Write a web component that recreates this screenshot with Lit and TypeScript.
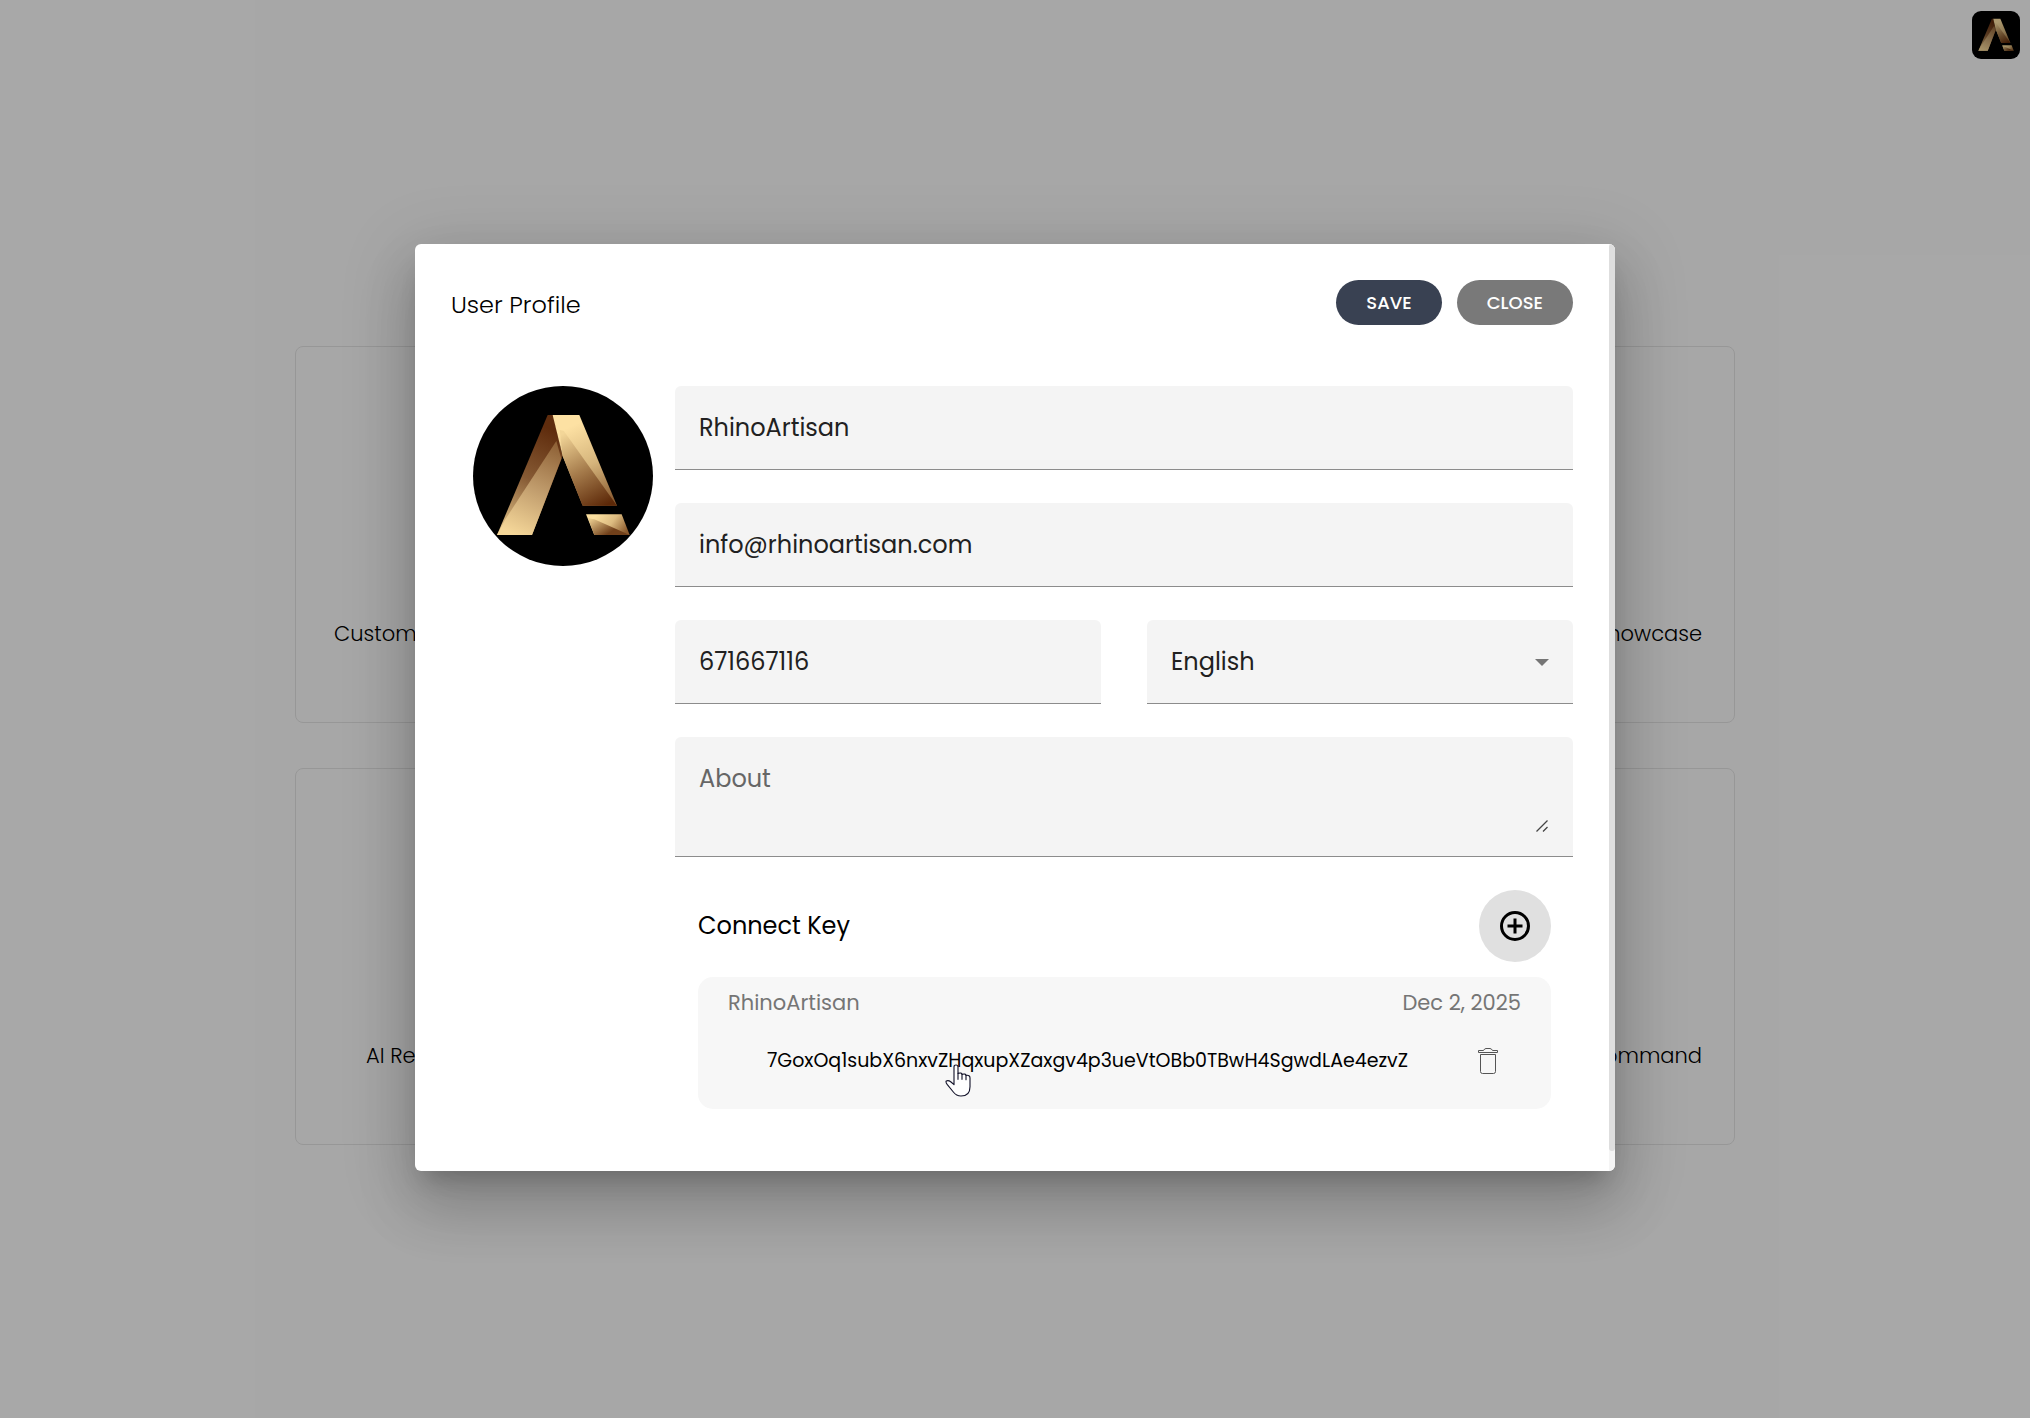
import { LitElement, html, css, svg } from "lit";
import { customElement, property } from "lit/decorators.js";

@customElement("brand-logo")
export class BrandLogo extends LitElement {
  static styles = css`
    :host {
      display: block;
      overflow: hidden;
      background: #000;
    }
    .mark {
      display: block;
      width: 100%;
      height: 100%;
    }
  `;

  render() {
    return html`
      <svg class="mark" viewBox="38 48 540 540" role="img" aria-label="Logo">
        <defs>
          <linearGradient id="legDark" gradientUnits="userSpaceOnUse" x1="275" y1="180" x2="130" y2="470">
            <stop offset="0" stop-color="#5f2c0d" />
            <stop offset="0.5" stop-color="#865a34" />
            <stop offset="1" stop-color="#d9b980" />
          </linearGradient>
          <linearGradient id="legLight" gradientUnits="userSpaceOnUse" x1="290" y1="225" x2="165" y2="495">
            <stop offset="0" stop-color="#8f6237" />
            <stop offset="0.5" stop-color="#c19d6d" />
            <stop offset="1" stop-color="#f5d799" />
          </linearGradient>
          <linearGradient id="armLight" gradientUnits="userSpaceOnUse" x1="330" y1="170" x2="440" y2="400">
            <stop offset="0" stop-color="#fde1a3" />
            <stop offset="0.5" stop-color="#d6b57c" />
            <stop offset="1" stop-color="#8a5c31" />
          </linearGradient>
          <linearGradient id="armDark" gradientUnits="userSpaceOnUse" x1="310" y1="190" x2="430" y2="410">
            <stop offset="0" stop-color="#f3d698" />
            <stop offset="0.5" stop-color="#a67c4c" />
            <stop offset="1" stop-color="#5c2808" />
          </linearGradient>
          <linearGradient id="footLight" gradientUnits="userSpaceOnUse" x1="410" y1="433" x2="490" y2="495">
            <stop offset="0" stop-color="#fbdf9f" />
            <stop offset="0.5" stop-color="#dcbb80" />
            <stop offset="1" stop-color="#8a592c" />
          </linearGradient>
          <linearGradient id="footDark" gradientUnits="userSpaceOnUse" x1="395" y1="447" x2="430" y2="500">
            <stop offset="0" stop-color="#e6c78a" />
            <stop offset="1" stop-color="#71401a" />
          </linearGradient>
        </defs>
        <path d="M262 135H279L307 258L215 495H110Z" fill="url(#legDark)" />
        <path d="M288 213L303 266L215 495H110L135 448Z" fill="url(#legLight)" />
        <path d="M277 135H357L470 407H367L307 258Z" fill="url(#armLight)" />
        <path d="M298 180L310 182L470 407H367L307 258Z" fill="url(#armDark)" />
        <path d="M377 433H484L508 495H402Z" fill="url(#footLight)" />
        <path d="M383 445L402 448L508 495H402Z" fill="url(#footDark)" />
      </svg>
    `;
  }
}

@customElement("tool-board")
export class ToolBoard extends LitElement {
  @property({ attribute: false }) tiles: { label: string; place: string }[] = [
    { label: "Custom", place: "first" },
    { label: "howcase", place: "end" },
    { label: "AI Re", place: "second" },
    { label: "ommand", place: "end" },
  ];

  static styles = css`
    :host {
      display: flex;
      flex-direction: column;
      min-height: 100vh;
      background: #f7f7f7;
      color: #000;
    }
    .bar {
      display: flex;
      justify-content: flex-end;
      align-items: flex-start;
      min-height: 72px;
      padding: 11px 10px;
      box-sizing: border-box;
    }
    .badge {
      width: 48px;
      height: 48px;
      border-radius: 9px;
    }
    .main {
      flex: 1;
      display: flex;
      align-items: center;
      justify-content: center;
      padding: 0 24px;
    }
    .grid {
      display: grid;
      grid-template-columns: 1fr 1fr;
      gap: 45px;
      width: 100%;
      max-width: 1440px;
    }
    .tile {
      display: flex;
      flex-direction: column;
      justify-content: flex-end;
      min-height: 377px;
      padding: 0 32px 72px;
      box-sizing: border-box;
      border: 1px solid #dfdfdf;
      border-radius: 8px;
      font-size: 21px;
      line-height: 32px;
      font-weight: 300;
    }
    .first {
      padding-left: 38px;
    }
    .second {
      padding-left: 70px;
    }
    .end {
      text-align: end;
    }
  `;

  render() {
    return html`
      <header class="bar"><brand-logo class="badge"></brand-logo></header>
      <main class="main">
        <div class="grid">
          ${this.tiles.map((t) => html`<div class="tile ${t.place}">${t.label}</div>`)}
        </div>
      </main>
    `;
  }
}

const plusIcon = svg`
  <svg class="plus" viewBox="0 0 36 36" fill="none" stroke="#000" stroke-width="3" aria-hidden="true">
    <circle cx="18" cy="18" r="13.5" />
    <path d="M18 10.5V25.5M10.5 18H25.5" />
  </svg>`;

const trashIcon = svg`
  <svg class="trash" viewBox="0 0 20 27" fill="none" stroke="#555" stroke-width="1" aria-hidden="true">
    <path d="M0.5 2.5H5.5Q6.5 0.5 8 0.5H12Q13.5 0.5 14.5 2.5H19.5V4.5H0.5Z" />
    <path d="M2.5 6.5H17.5V23.5Q17.5 25.5 15.5 25.5H4.5Q2.5 25.5 2.5 23.5Z" />
  </svg>`;

const handIcon = svg`
  <svg class="hand" viewBox="0 0 78 99" fill="#fff" stroke="#14142b" stroke-width="3.4" stroke-linejoin="round" stroke-linecap="round" aria-hidden="true">
    <path d="M27 62V9Q27 3 33 3Q39 3 39 9V28Q51 25 51 31Q62 28 63 34Q75 32 75 42V68Q75 96 48 96Q34 96 25 84L7 62Q1 54 4 51Q10 48 18 54Z" />
    <path d="M39 28V46M51 31V46M63 34V47" fill="none" />
  </svg>`;

@customElement("profile-dialog")
export class ProfileDialog extends LitElement {
  static styles = css`
    :host {
      display: flex;
      width: 100%;
      max-width: 1200px;
      overflow: hidden;
      border-radius: 6px;
      background: #fff;
      color: #000;
      box-shadow: 0 16px 22px -10px rgba(0, 0, 0, 0.2), 0 36px 57px 4px rgba(0, 0, 0, 0.14),
        0 14px 69px 12px rgba(0, 0, 0, 0.12);
    }
    .content {
      flex: 1;
      min-width: 0;
      padding: 36px 36px 62px;
    }
    .track {
      display: flex;
      width: 6px;
      padding-bottom: 20px;
      background: #f5f5f5;
    }
    .thumb {
      flex: 1;
      border-radius: 3px;
      background: #dedede;
    }
    .head {
      display: flex;
      justify-content: space-between;
      align-items: center;
      margin-bottom: 61px;
    }
    .title {
      margin: 0;
      padding-top: 4px;
      font-size: 24px;
      line-height: 36px;
      font-weight: 300;
    }
    .actions {
      display: flex;
      gap: 15px;
    }
    button,
    input,
    select,
    textarea {
      margin: 0;
      border: 0;
      padding: 0;
      background: none;
      color: inherit;
      font: inherit;
      outline: none;
    }
    .pill {
      height: 45px;
      padding: 0 30px;
      border-radius: 23px;
      color: #fff;
      font-size: 18px;
      line-height: 27px;
      font-weight: 500;
    }
    .save {
      background: #394152;
    }
    .close {
      background: #797979;
    }
    .body {
      display: flex;
      align-items: flex-start;
    }
    .avatar {
      flex: none;
      width: 180px;
      height: 180px;
      margin: 0 22px;
      border-radius: 50%;
    }
    .form {
      flex: 1;
      min-width: 0;
      display: flex;
      flex-direction: column;
      gap: 33px;
    }
    .pair {
      display: grid;
      grid-template-columns: repeat(2, minmax(0, 1fr));
      gap: 46px;
    }
    .field {
      position: relative;
      display: flex;
      border-bottom: 1px solid #8c8c8c;
      border-radius: 6px 6px 0 0;
      background: #f4f4f4;
      color: #212121;
      font-size: 24px;
      line-height: 36px;
    }
    .control {
      flex: 1;
      min-width: 0;
      height: 83px;
      padding: 0 24px;
      box-sizing: border-box;
      appearance: none;
    }
    .area {
      height: 119px;
      padding-top: 24px;
      resize: none;
    }
    .area::placeholder {
      color: #666;
      opacity: 1;
    }
    .caret {
      position: absolute;
      right: 24px;
      top: 39px;
      width: 14px;
      height: 7px;
      pointer-events: none;
    }
    .grip {
      position: absolute;
      right: 25px;
      bottom: 24px;
      width: 12px;
      height: 12px;
      pointer-events: none;
    }
    .keys {
      display: flex;
      flex-direction: column;
      gap: 15px;
      padding: 0 22px 0 23px;
    }
    .keyhead {
      display: flex;
      justify-content: space-between;
      align-items: center;
    }
    .subtitle {
      margin: 0;
      font-size: 24px;
      line-height: 36px;
      font-weight: 400;
    }
    .add {
      display: flex;
      align-items: center;
      justify-content: center;
      width: 72px;
      height: 72px;
      border-radius: 50%;
      background: #e0e0e0;
    }
    .plus {
      width: 36px;
      height: 36px;
    }
    .card {
      height: 132px;
      padding: 10px 30px 0;
      box-sizing: border-box;
      border-radius: 15px;
      background: #f7f7f7;
    }
    .meta {
      display: flex;
      justify-content: space-between;
      color: #757575;
      font-size: 21px;
      line-height: 32px;
    }
    .row {
      display: flex;
      align-items: center;
      justify-content: space-between;
      margin-top: 24px;
      padding: 0 23px 0 39px;
    }
    .key {
      position: relative;
      font-size: 19px;
      line-height: 36px;
      cursor: pointer;
    }
    .hand {
      position: absolute;
      left: 178px;
      top: 21px;
      width: 26px;
      height: 33px;
    }
    .remove {
      display: flex;
    }
    .trash {
      width: 20px;
      height: 27px;
    }
  `;

  render() {
    return html`
      <div class="content">
        <header class="head">
          <h1 class="title">User Profile</h1>
          <div class="actions">
            <button class="pill save" type="button">SAVE</button>
            <button class="pill close" type="button">CLOSE</button>
          </div>
        </header>
        <div class="body">
          <brand-logo class="avatar"></brand-logo>
          <form class="form">
            <div class="field">
              <input class="control" type="text" aria-label="Name" .value=${"RhinoArtisan"} />
            </div>
            <div class="field">
              <input class="control" type="email" aria-label="Email" .value=${"info@rhinoartisan.com"} />
            </div>
            <div class="pair">
              <div class="field">
                <input class="control" type="tel" aria-label="Phone" .value=${"671667116"} />
              </div>
              <div class="field">
                <select class="control" aria-label="Language">
                  <option>English</option>
                </select>
                <svg class="caret" viewBox="0 0 14 7" aria-hidden="true"><path d="M0 0H14L7 7Z" fill="#757575" /></svg>
              </div>
            </div>
            <div class="field">
              <textarea class="control area" aria-label="About" placeholder="About"></textarea>
              <svg class="grip" viewBox="0 0 12 12" stroke="#444" stroke-width="1.3" aria-hidden="true">
                <path d="M0.5 11.5L11.5 0.5M7 11.5L11.5 7" />
              </svg>
            </div>
            <section class="keys">
              <div class="keyhead">
                <h2 class="subtitle">Connect Key</h2>
                <button class="add" type="button" aria-label="Add key">${plusIcon}</button>
              </div>
              <div class="card">
                <div class="meta"><span>RhinoArtisan</span><time datetime="2025-12-02">Dec 2, 2025</time></div>
                <div class="row">
                  <button class="key" type="button">7GoxOq1subX6nxvZHqxupXZaxgv4p3ueVtOBb0TBwH4SgwdLAe4ezvZ${handIcon}</button>
                  <button class="remove" type="button" aria-label="Delete key">${trashIcon}</button>
                </div>
              </div>
            </section>
          </form>
        </div>
      </div>
      <div class="track"><div class="thumb"></div></div>
    `;
  }
}

@customElement("app-root")
export class AppRoot extends LitElement {
  static styles = css`
    :host {
      display: block;
      position: relative;
      min-height: 100vh;
      font-family: Poppins, Inter, "Open Sans", sans-serif;
    }
    .backdrop {
      position: absolute;
      inset: 0;
      display: flex;
      align-items: center;
      justify-content: center;
      padding: 24px 24px 27px;
      background: rgba(0, 0, 0, 0.32);
    }
  `;

  render() {
    return html`
      <tool-board></tool-board>
      <div class="backdrop"><profile-dialog role="dialog" aria-label="User Profile"></profile-dialog></div>
    `;
  }
}
